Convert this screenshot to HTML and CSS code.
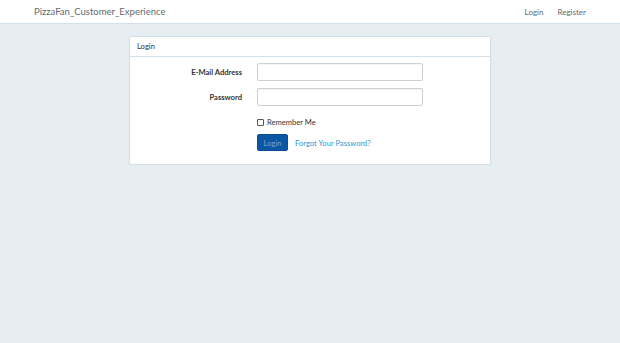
FILE: index.html
```html
<!DOCTYPE html>
<html lang="en">
<head>
    <meta charset="UTF-8">
    <meta name="viewport" content="width=device-width, initial-scale=1.0">
    <title>PizzaFan_Customer_Experience</title>
    <link rel="stylesheet" href="styles.css">
</head>
<body>
    <nav class="navbar">
        <div class="navbar-inner">
            <a class="brand" href="#">PizzaFan_Customer_Experience</a>
            <ul class="nav-links">
                <li><a href="#">Login</a></li>
                <li><a href="#">Register</a></li>
            </ul>
        </div>
    </nav>

    <div class="panel">
        <div class="panel-heading">Login</div>
        <div class="panel-body">
            <form class="login-form">
                <label class="control-label" for="email">E-Mail Address</label>
                <input class="form-control" type="email" id="email">

                <label class="control-label" for="password">Password</label>
                <input class="form-control" type="password" id="password">

                <div class="form-offset">
                    <label class="checkbox"><input type="checkbox"> Remember Me</label>
                </div>

                <div class="form-offset actions">
                    <button type="submit" class="btn">Login</button>
                    <a class="btn-link" href="#">Forgot Your Password?</a>
                </div>
            </form>
        </div>
    </div>
</body>
</html>
```

FILE: styles.css
```css
body {
    margin: 0;
    font-family: Lato, "Open Sans", sans-serif;
    font-size: 7.6px;
    color: #636b6f;
    background-color: #e7eef2;
}
a {
    text-decoration: none;
}
.navbar {
    background: #fff;
    border-bottom: 1px solid #d3e0e9;
    height: 23px;
}
.navbar-inner {
    width: 552px;
    margin: 0 auto;
    display: flex;
    align-items: center;
    justify-content: space-between;
    height: 23px;
}
.brand {
    color: #636b6f;
    font-size: 9.5px;
}
.nav-links {
    list-style: none;
    margin: 0;
    padding: 0;
    display: flex;
    gap: 14px;
}
.nav-links a {
    color: #636b6f;
    font-size: 8px;
}
.panel {
    width: 360px;
    margin: 12px auto 0;
    background: #fff;
    border: 1px solid #d3e0e9;
    border-radius: 2px;
    box-shadow: 0 1px 2px rgba(0, 0, 0, 0.06);
}
.panel-heading {
    height: 19px;
    line-height: 19px;
    padding-left: 7px;
    border-bottom: 1px solid #d3e0e9;
    color: #333;
}
.panel-body {
    padding: 6px 0 13px;
}
.login-form {
    display: grid;
    grid-template-columns: 127px 166px;
    row-gap: 7px;
    align-items: center;
}
.control-label {
    text-align: right;
    padding-right: 15px;
    font-weight: bold;
    color: #333;
}
.form-control {
    box-sizing: border-box;
    height: 18px;
    width: 166px;
    margin: 0;
    border: 1px solid #ccd0d2;
    border-radius: 2px;
    box-shadow: inset 0 1px 1px rgba(0, 0, 0, 0.05);
}
.form-offset {
    grid-column: 2;
}
.checkbox {
    display: flex;
    align-items: center;
    gap: 3px;
    color: #333;
    padding-top: 4px;
}
.checkbox input {
    appearance: none;
    box-sizing: border-box;
    margin: 0;
    width: 7px;
    height: 7px;
    border: 1px solid #555;
    border-radius: 1px;
    background: #fff;
}
.actions {
    display: flex;
    align-items: center;
    gap: 7px;
}
.btn {
    height: 17px;
    width: 31px;
    padding: 0;
    border: 1px solid #0a4f96;
    border-radius: 2px;
    background: #0b57a4;
    color: #7fa3cf;
    font-family: inherit;
    font-size: 7.6px;
}
.btn-link {
    color: #3097d1;
}
```
